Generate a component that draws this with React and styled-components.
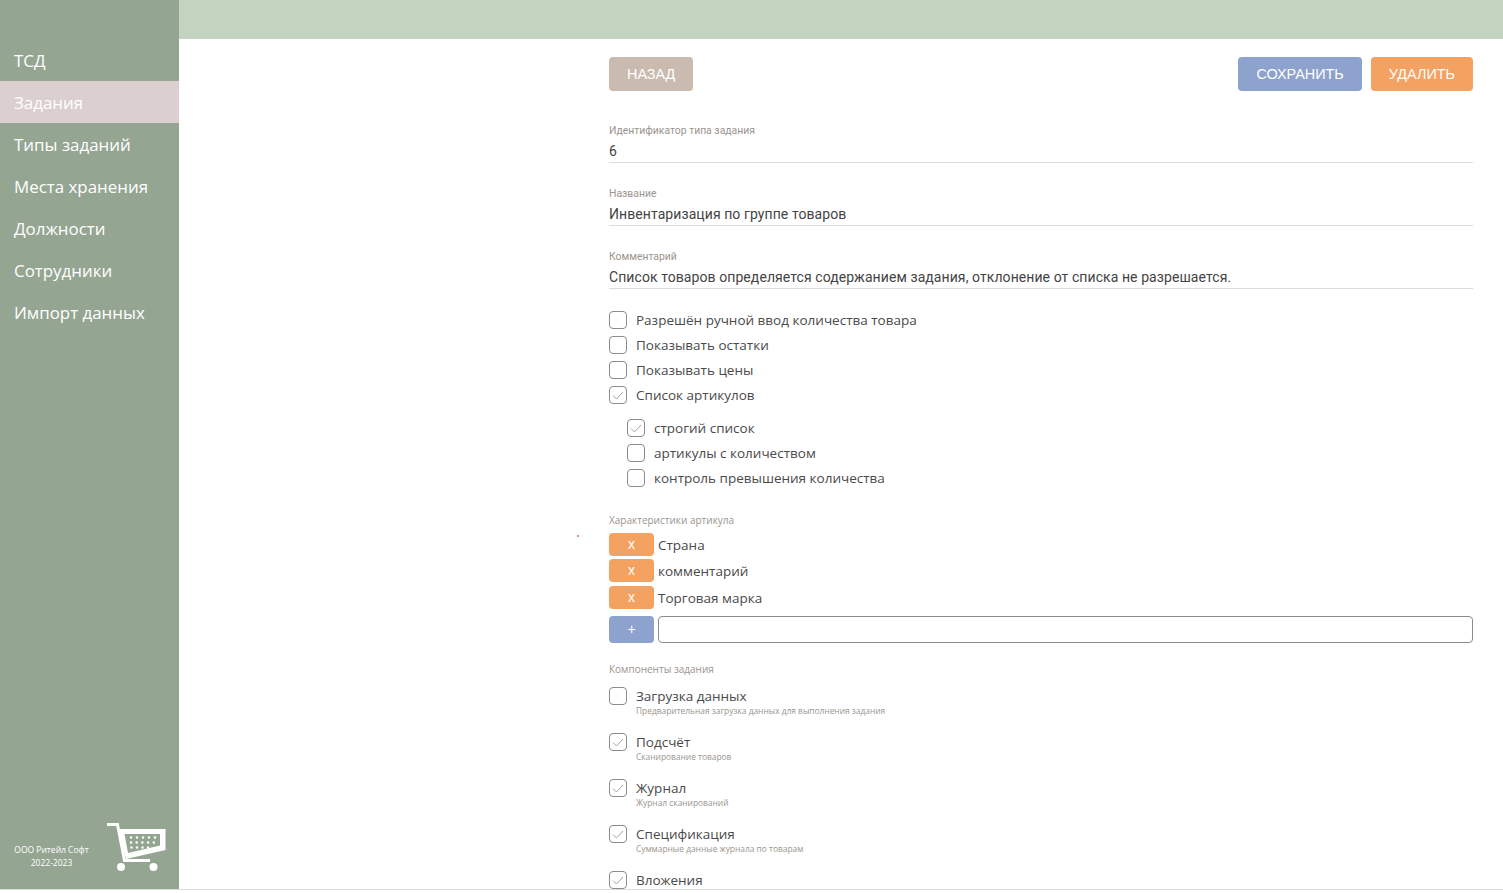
import styled, { createGlobalStyle } from "styled-components";

const GlobalStyle = createGlobalStyle`
  html, body {
    margin: 0;
    padding: 0;
    background: #fff;
    overflow: hidden;
  }
`;

const menu = ["ТСД", "Задания", "Типы заданий", "Места хранения", "Должности", "Сотрудники", "Импорт данных"];
const mainChecks = [
  { label: "Разрешён ручной ввод количества товара" },
  { label: "Показывать остатки" },
  { label: "Показывать цены" },
  { label: "Список артикулов", checked: true },
];
const subChecks = [
  { label: "строгий список", checked: true },
  { label: "артикулы с количеством" },
  { label: "контроль превышения количества" },
];
const traits = ["Страна", "комментарий", "Торговая марка"];
const parts = [
  { label: "Загрузка данных", hint: "Предварительная загрузка данных для выполнения задания" },
  { label: "Подсчёт", hint: "Сканирование товаров", checked: true },
  { label: "Журнал", hint: "Журнал сканирований", checked: true },
  { label: "Спецификация", hint: "Суммарные данные журнала по товарам", checked: true },
  { label: "Вложения", checked: true },
];

const Cart = () => (
  <CartIcon viewBox="0 0 59 49" width="59" height="49">
    <path d="M0 1.500H10.500L17.500 37.500H43" fill="none" stroke="#fff" strokeWidth="3" />
    <path fillRule="evenodd" fill="#fff" d="M11 6H58.500V27L19 36ZM17.500 11 21 30 53 22.500V11Z" />
    <g fill="#fff">
      {[0, 1, 2, 3, 4].map((i) => <circle key={i} cx={24 + i * 6} cy="14.500" r="1.200" />)}
      {[0, 1, 2, 3, 4].map((i) => <circle key={i} cx={24 + i * 5.700} cy="19.500" r="1.200" />)}
      {[0, 1, 2, 3].map((i) => <circle key={i} cx={24.500 + i * 5.500} cy="24.500" r="1.200" />)}
    </g>
    <circle cx="14" cy="44" r="4" fill="#fff" />
    <circle cx="46.500" cy="44" r="4" fill="#fff" />
  </CartIcon>
);

const Tick = ({ checked }) => (
  <Box>
    {checked && (
      <svg viewBox="0 0 16 16" width="16" height="16">
        <path d="M3 8.500 6.500 12 13 5" fill="none" stroke="#a3a39f" strokeWidth="1" />
      </svg>
    )}
  </Box>
);

const Check = ({ label, checked }) => (
  <CheckRow>
    <Tick checked={checked} />
    <CheckText>{label}</CheckText>
  </CheckRow>
);

export default function App() {
  return (
    <>
      <GlobalStyle />
      <Page>
        <Sidebar>
          <Menu>
            {menu.map((item) => (
              <MenuItem key={item} $active={item === "Задания"}>{item}</MenuItem>
            ))}
          </Menu>
          <SideFooter>
            <Copyright>ООО Ритейл Софт<br />2022-2023</Copyright>
            <Cart />
          </SideFooter>
        </Sidebar>
        <Main>
          <TopBar />
          <Content>
            <Form>
              <Toolbar>
                <Button $bg="#c9bbb0">Назад</Button>
                <Spacer />
                <Button $bg="#8da2cd">Сохранить</Button>
                <Button $bg="#f4a261">Удалить</Button>
              </Toolbar>
              <Fields>
                <Field>
                  <FieldLabel>Идентификатор типа задания</FieldLabel>
                  <FieldValue>6</FieldValue>
                </Field>
                <Field>
                  <FieldLabel>Название</FieldLabel>
                  <FieldValue>Инвентаризация по группе товаров</FieldValue>
                </Field>
                <Field>
                  <FieldLabel>Комментарий</FieldLabel>
                  <FieldValue>Список товаров определяется содержанием задания, отклонение от списка не разрешается.</FieldValue>
                </Field>
              </Fields>
              <Checks>
                {mainChecks.map((c) => <Check key={c.label} {...c} />)}
              </Checks>
              <SubChecks>
                {subChecks.map((c) => <Check key={c.label} {...c} />)}
              </SubChecks>
              <SectionLabel>Характеристики артикула</SectionLabel>
              <Traits>
                {traits.map((t) => (
                  <TraitRow key={t}>
                    <SmallButton $bg="#f4a261">x</SmallButton>
                    <TraitText>{t}</TraitText>
                  </TraitRow>
                ))}
                <AddRow>
                  <SmallButton $bg="#8da2cd" $tall>+</SmallButton>
                  <TraitInput />
                </AddRow>
              </Traits>
              <PartsLabel>Компоненты задания</PartsLabel>
              {parts.map((p) => (
                <PartRow key={p.label}>
                  <Tick checked={p.checked} />
                  <PartText>
                    <PartName>{p.label}</PartName>
                    {p.hint && <PartHint>{p.hint}</PartHint>}
                  </PartText>
                </PartRow>
              ))}
            </Form>
            <Speck />
          </Content>
        </Main>
      </Page>
    </>
  );
}

const Page = styled.div`
  display: flex;
  height: 889px;
  overflow: hidden;
  border-bottom: 1px solid #dcdcdc;
  font-family: "Open Sans", "Liberation Sans", sans-serif;
`;

const Sidebar = styled.aside`
  width: 179px;
  flex: none;
  display: flex;
  flex-direction: column;
  background: #94a592;
  padding-top: 39px;
  box-sizing: border-box;
`;

const Menu = styled.nav`
  flex: 1;
`;

const MenuItem = styled.div`
  height: 42px;
  line-height: 43px;
  padding-left: 14px;
  font-size: 16.900px;
  color: #fff;
  background: ${(p) => (p.$active ? "#dccfcf" : "transparent")};
`;

const SideFooter = styled.div`
  display: flex;
  align-items: flex-end;
  padding: 0 13px 17px 14px;
  justify-content: space-between;
`;

const Copyright = styled.div`
  width: 75px;
  font-size: 8.500px;
  line-height: 13px;
  color: #fff;
  text-align: center;
  white-space: nowrap;
  padding-bottom: 3px;
`;

const CartIcon = styled.svg`
  display: block;
  flex: none;
`;

const Main = styled.div`
  flex: 1;
  display: flex;
  flex-direction: column;
  min-width: 0;
`;

const TopBar = styled.header`
  height: 39px;
  flex: none;
  background: #c3d3c0;
`;

const Content = styled.main`
  position: relative;
  flex: 1;
  display: flex;
  justify-content: flex-end;
  padding-right: 30px;
`;

const Speck = styled.i`
  position: absolute;
  left: 398px;
  top: 496px;
  width: 2px;
  height: 2px;
  border-radius: 50%;
  background: #c96a5a;
`;

const Form = styled.form`
  width: 864px;
  padding-top: 18px;
`;

const Toolbar = styled.div`
  display: flex;
  gap: 9px;
  margin-bottom: 33px;
`;

const Spacer = styled.div`
  flex: 1;
`;

const Button = styled.div`
  height: 34px;
  line-height: 34px;
  padding: 0 18px;
  border-radius: 4px;
  background: ${(p) => p.$bg};
  color: #fff;
  font-family: "Liberation Sans", Arial, sans-serif;
  font-size: 14.400px;
  text-transform: uppercase;
`;

const Fields = styled.div`
  display: flex;
  flex-direction: column;
  gap: 24px;
`;

const Field = styled.div`
  height: 38px;
  border-bottom: 1px solid #dcdcdc;
`;

const FieldLabel = styled.div`
  font-family: Roboto, "Liberation Sans", sans-serif;
  font-size: 10.400px;
  line-height: 13px;
  color: #9a948e;
`;

const FieldValue = styled.div`
  font-family: Roboto, "Liberation Sans", sans-serif;
  font-size: 14px;
  letter-spacing: 0.08px;
  line-height: 22px;
  margin-top: 3px;
  color: #444;
`;

const Checks = styled.div`
  padding-top: 18px;
`;

const SubChecks = styled.div`
  padding: 8px 0 0 18px;
`;

const CheckRow = styled.div`
  display: flex;
  align-items: center;
  height: 25px;
`;

const Box = styled.span`
  width: 18px;
  height: 18px;
  flex: none;
  display: flex;
  align-items: center;
  justify-content: center;
  border: 1px solid #8c8c8c;
  border-radius: 4px;
  box-sizing: border-box;
  background: #fff;
`;

const CheckText = styled.span`
  margin-left: 9px;
  font-size: 13.500px;
  color: #4a4a4a;
`;

const SectionLabel = styled.div`
  margin-top: 24px;
  font-size: 10px;
  line-height: 13px;
  color: #9a948e;
`;

const Traits = styled.div`
  margin-top: 4px;
`;

const TraitRow = styled.div`
  display: flex;
  align-items: center;
  height: 26.500px;
`;

const AddRow = styled.div`
  display: flex;
  align-items: center;
  margin-top: 5px;
  height: 27px;
`;

const SmallButton = styled.div`
  width: 45px;
  height: ${(p) => (p.$tall ? "27px" : "23px")};
  line-height: ${(p) => (p.$tall ? "27px" : "22px")};
  flex: none;
  border-radius: 4px;
  background: ${(p) => p.$bg};
  color: #fff;
  font-family: "Liberation Sans", Arial, sans-serif;
  font-size: 14px;
  text-align: center;
`;

const TraitText = styled.span`
  margin-left: 4px;
  padding-top: 1px;
  font-size: 13.500px;
  color: #4a4a4a;
`;

const TraitInput = styled.div`
  flex: 1;
  height: 27px;
  margin-left: 4px;
  border: 1px solid #8c8c8c;
  border-radius: 4px;
  box-sizing: border-box;
`;

const PartsLabel = styled(SectionLabel)`
  margin-top: 20px;
  margin-bottom: 11px;
`;

const PartRow = styled.div`
  display: flex;
  height: 46px;
`;

const PartText = styled.div`
  margin-left: 9px;
`;

const PartName = styled.div`
  font-size: 13.500px;
  line-height: 18px;
  color: #4a4a4a;
`;

const PartHint = styled.div`
  font-size: 8.400px;
  line-height: 11px;
  color: #9a948e;
`;
